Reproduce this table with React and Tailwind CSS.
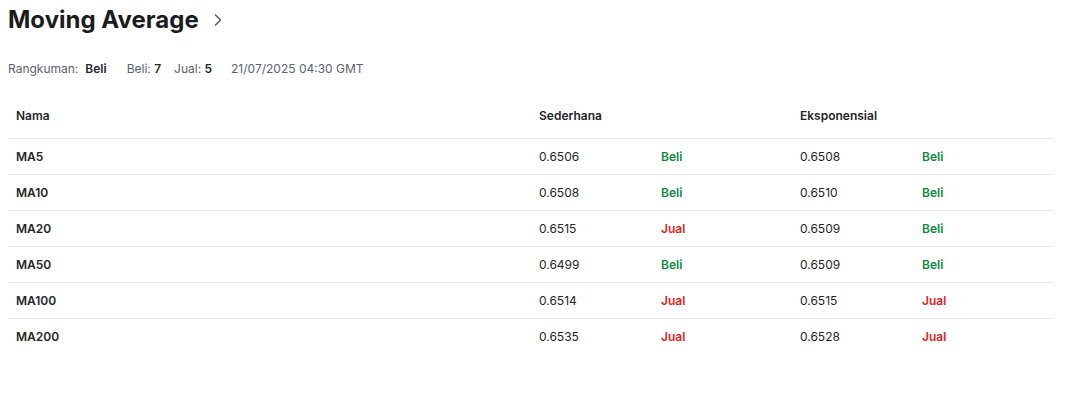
import { ChevronRight } from 'lucide-react';

const rows = [
  { name: 'MA5', simple: '0.6506', simpleAct: 'Beli', exp: '0.6508', expAct: 'Beli' },
  { name: 'MA10', simple: '0.6508', simpleAct: 'Beli', exp: '0.6510', expAct: 'Beli' },
  { name: 'MA20', simple: '0.6515', simpleAct: 'Jual', exp: '0.6509', expAct: 'Beli' },
  { name: 'MA50', simple: '0.6499', simpleAct: 'Beli', exp: '0.6509', expAct: 'Beli' },
  { name: 'MA100', simple: '0.6514', simpleAct: 'Jual', exp: '0.6515', expAct: 'Jual' },
  { name: 'MA200', simple: '0.6535', simpleAct: 'Jual', exp: '0.6528', expAct: 'Jual' },
];

function Action({ value }) {
  const color = value === 'Beli' ? 'text-[#0a8a3a]' : 'text-[#e41d1d]';
  return <span className={`font-semibold ${color}`}>{value}</span>;
}

export default function App() {
  return (
    <div className="min-h-[396px] bg-white px-2 pt-[5px] text-[#232526] font-['Inter',sans-serif]">
      <div className="flex items-center gap-2">
        <h2 className="text-[24px] font-bold leading-[30px] text-[#1a1c1e]">Moving Average</h2>
        <ChevronRight className="ml-[1px] h-5 w-5 text-[#5b616e]" strokeWidth={2} />
      </div>

      <div className="mt-[25px] flex items-center text-xs leading-[18px]">
        <span className="text-[#5b616e]">Rangkuman:</span>
        <span className="ml-[7px] font-semibold">Beli</span>
        <span className="ml-[20px] text-[#5b616e]">
          Beli: <span className="font-semibold text-[#232526]">7</span>
        </span>
        <span className="ml-[13px] text-[#5b616e]">
          Jual: <span className="font-semibold text-[#232526]">5</span>
        </span>
        <span className="ml-[19px] text-[#5b616e]">21/07/2025 04:30 GMT</span>
      </div>

      <table className="mt-[16px] w-[1045px] table-fixed border-collapse text-xs">
        <colgroup>
          <col className="w-[523px]" />
          <col className="w-[122px]" />
          <col className="w-[139px]" />
          <col className="w-[122px]" />
          <col className="w-[139px]" />
        </colgroup>
        <thead>
          <tr className="h-[44px] text-left font-semibold">
            <th className="px-2 font-semibold">Nama</th>
            <th className="px-2 font-semibold" colSpan={2}>Sederhana</th>
            <th className="px-2 font-semibold" colSpan={2}>Eksponensial</th>
          </tr>
        </thead>
        <tbody>
          {rows.map((r) => (
            <tr key={r.name} className="h-9 border-t border-[#e6e9eb]">
              <td className="px-2 pt-[2px] font-semibold">{r.name}</td>
              <td className="px-2 pt-[2px]">{r.simple}</td>
              <td className="px-2 pt-[2px]"><Action value={r.simpleAct} /></td>
              <td className="px-2 pt-[2px]">{r.exp}</td>
              <td className="px-2 pt-[2px]"><Action value={r.expAct} /></td>
            </tr>
          ))}
        </tbody>
      </table>
    </div>
  );
}
